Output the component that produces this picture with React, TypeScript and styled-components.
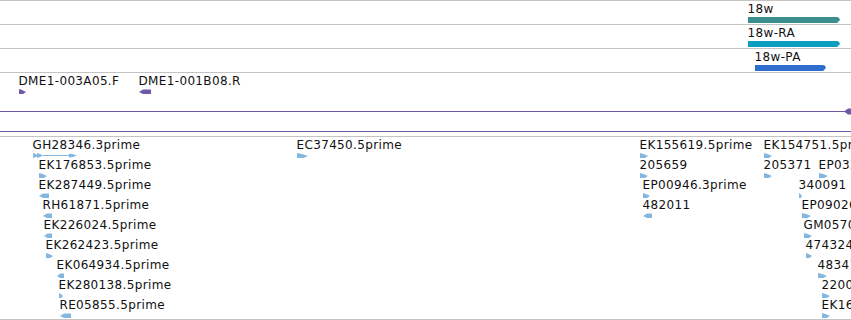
import React from 'react';
import styled, { createGlobalStyle } from 'styled-components';

const Global = createGlobalStyle`
  html, body { margin: 0; padding: 0; background: #ffffff; }
  body {
    font-family: "DejaVu Sans", "Liberation Sans", sans-serif;
    overflow: hidden;
  }
`;

const GRID = '#c4c4c4';
const PURPLE = '#7059a6';
const EST_BLUE = '#84b7e0';

const Viewport = styled.div`
  width: 851px;
  height: 320px;
  overflow: hidden;
  background: #ffffff;
  display: flex;
  flex-direction: column;
`;

const Track = styled.div<{ $h: number; $bottom?: string }>`
  position: relative;
  flex: none;
  box-sizing: border-box;
  height: ${(p) => p.$h}px;
  border-top: 1px solid ${GRID};
  ${(p) => (p.$bottom ? `border-bottom: 1px solid ${p.$bottom};` : '')}
`;

const Spacer = styled.div<{ $h: number }>`
  flex: none;
  height: ${(p) => p.$h}px;
`;

const Feature = styled.div`
  position: absolute;
  display: flex;
  flex-direction: column;
  align-items: flex-start;
  gap: 1px;
`;

const Label = styled.span`
  display: block;
  margin-left: -0.5px;
  font-size: 12px;
  line-height: 14px;
  letter-spacing: 0.35px;
  color: #111111;
  white-space: nowrap;
`;

const Glyph = styled.svg`
  display: block;
  flex: none;
`;

const LongFeature = styled.svg`
  position: absolute;
  left: 0;
  display: block;
`;

type Dir = 'right' | 'left' | 'spliced' | 'bar';

function Shape({ dir, w, h, color }: { dir: Dir; w: number; h: number; color: string }) {
  if (dir === 'bar') {
    return (
      <Glyph width={w} height={h}>
        <polygon points={`0,0 ${w - 3},0 ${w - 1},0.8 ${w},${h / 2} ${w - 3},${h} 0,${h}`} fill={color} />
      </Glyph>
    );
  }
  if (dir === 'right') {
    return (
      <Glyph width={w} height={h}>
        <polygon points={`0,0 ${w * 0.45},0.9 ${w},${h * 0.62} ${w * 0.6},${h} 0,${h}`} fill={color} />
      </Glyph>
    );
  }
  if (dir === 'left') {
    const head = Math.min(4, w * 0.45);
    return (
      <Glyph width={w} height={h}>
        <polygon points={`0,${h * 0.6} ${head},0.6 ${w},0.6 ${w},${h} ${head},${h}`} fill={color} />
      </Glyph>
    );
  }
  // spliced: two small arrow blocks, an intron line, and an arrowhead at the end
  return (
    <Glyph width={w} height={h}>
      <polygon points={`0,0 3,1 5,2.5 3,4 0,5`} fill={color} />
      <polygon points={`4,0 7,1 10,2.5 7,4 4,5`} fill={color} />
      <rect x={10} y={2} width={w - 17} height={1} fill={color} />
      <polygon points={`${w - 8},0.5 ${w - 4},1.2 ${w},2.5 ${w - 4},4 ${w - 8},4.5`} fill={color} />
    </Glyph>
  );
}

type Item = { name: string; x: number; row: number; dir: Dir; w: number };

function Feat({ item, color, h, pitch }: { item: Item; color: string; h: number; pitch: number }) {
  return (
    <Feature style={{ left: item.x, top: 1 + item.row * pitch }}>
      <Label>{item.name}</Label>
      <Shape dir={item.dir} w={item.w} h={h} color={color} />
    </Feature>
  );
}

const genes: { item: Item; color: string }[] = [
  { item: { name: '18w', x: 748, row: 0, dir: 'bar', w: 92 }, color: '#3c8f8f' },
  { item: { name: '18w-RA', x: 748, row: 0, dir: 'bar', w: 92 }, color: '#0a9fc1' },
  { item: { name: '18w-PA', x: 755, row: 0, dir: 'bar', w: 71 }, color: '#2f6dcc' },
];

const clones: Item[] = [
  { name: 'DME1-003A05.F', x: 19, row: 0, dir: 'right', w: 7 },
  { name: 'DME1-001B08.R', x: 139, row: 0, dir: 'left', w: 12 },
];

const ests: Item[] = [
  { name: 'GH28346.3prime', x: 33, row: 0, dir: 'spliced', w: 44 },
  { name: 'EC37450.5prime', x: 297, row: 0, dir: 'right', w: 11 },
  { name: 'EK155619.5prime', x: 640, row: 0, dir: 'right', w: 8 },
  { name: 'EK154751.5prime', x: 764, row: 0, dir: 'right', w: 8 },

  { name: 'EK176853.5prime', x: 39, row: 1, dir: 'right', w: 8 },
  { name: '205659', x: 640, row: 1, dir: 'right', w: 8 },
  { name: '205371', x: 764, row: 1, dir: 'right', w: 8 },
  { name: 'EP03278.5prime', x: 819, row: 1, dir: 'right', w: 9 },

  { name: 'EK287449.5prime', x: 39, row: 2, dir: 'left', w: 10 },
  { name: 'EP00946.3prime', x: 643, row: 2, dir: 'right', w: 7 },
  { name: '340091', x: 799, row: 2, dir: 'right', w: 3 },

  { name: 'RH61871.5prime', x: 43, row: 3, dir: 'left', w: 9 },
  { name: '482011', x: 643, row: 3, dir: 'left', w: 9 },
  { name: 'EP09026.3prime', x: 802, row: 3, dir: 'right', w: 9 },

  { name: 'EK226024.5prime', x: 44, row: 4, dir: 'left', w: 8 },
  { name: 'GM05704.5prime', x: 804, row: 4, dir: 'right', w: 8 },

  { name: 'EK262423.5prime', x: 46, row: 5, dir: 'right', w: 7 },
  { name: '474324', x: 806, row: 5, dir: 'right', w: 6 },

  { name: 'EK064934.5prime', x: 57, row: 6, dir: 'left', w: 7 },
  { name: '483412', x: 818, row: 6, dir: 'right', w: 9 },

  { name: 'EK280138.5prime', x: 59, row: 7, dir: 'right', w: 4 },
  { name: '220036', x: 822, row: 7, dir: 'right', w: 8 },

  { name: 'RE05855.5prime', x: 60, row: 8, dir: 'left', w: 11 },
  { name: 'EK162745.5prime', x: 822, row: 8, dir: 'right', w: 8 },
];

export default function App() {
  return (
    <>
      <Global />
      <Viewport>
        {genes.map((g) => (
          <Track key={g.item.name} $h={24}>
            <Feat item={g.item} color={g.color} h={6} pitch={20} />
          </Track>
        ))}
        <Track $h={60} $bottom={PURPLE}>
          {clones.map((c) => (
            <Feat key={c.name} item={c} color={PURPLE} h={5} pitch={20} />
          ))}
          <LongFeature width={851} height={7} style={{ top: 35 }}>
            <rect x={0} y={3} width={846} height={1} fill={PURPLE} />
            <polygon points="844,3.5 848,0.5 851,0.5 851,6.5 848,6.5" fill={PURPLE} />
          </LongFeature>
        </Track>
        <Spacer $h={4} />
        <Track $h={184} $bottom={GRID}>
          {ests.map((e) => (
            <Feat key={e.name} item={e} color={EST_BLUE} h={5} pitch={20} />
          ))}
        </Track>
      </Viewport>
    </>
  );
}
